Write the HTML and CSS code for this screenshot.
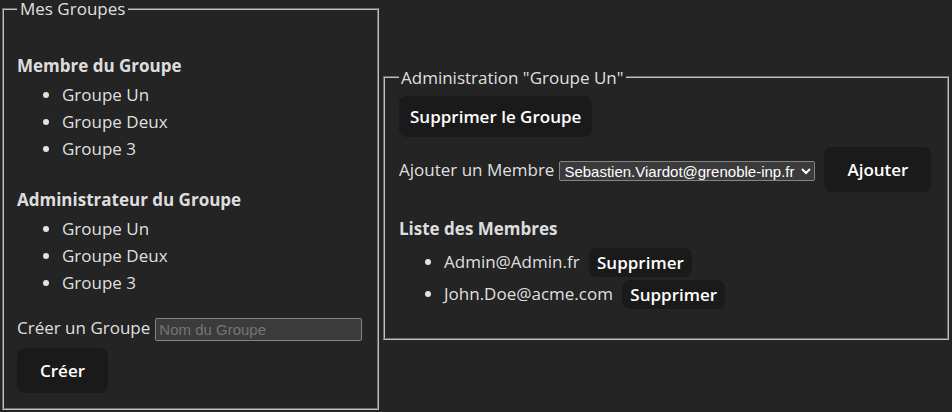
FILE: index.html
```html
<!DOCTYPE html>
<html lang="fr">
<head>
<meta charset="utf-8">
<title>Groupes</title>
<link rel="stylesheet" href="styles.css">
</head>
<body>
<div class="app">
  <fieldset class="panel panel-groups">
    <legend>Mes Groupes</legend>
    <div class="section-title first">Membre du Groupe</div>
    <ul class="list">
      <li>Groupe Un</li>
      <li>Groupe Deux</li>
      <li>Groupe 3</li>
    </ul>
    <div class="section-title">Administrateur du Groupe</div>
    <ul class="list">
      <li>Groupe Un</li>
      <li>Groupe Deux</li>
      <li>Groupe 3</li>
    </ul>
    <div class="form-row create-row">
      <label for="nom">Créer un Groupe</label>
      <input id="nom" class="text-input" type="text" placeholder="Nom du Groupe">
    </div>
    <button class="btn create-btn">Créer</button>
  </fieldset>

  <fieldset class="panel panel-admin">
    <legend>Administration "Groupe Un"</legend>
    <button class="btn btn-compact">Supprimer le Groupe</button>
    <div class="form-row add-row">
      <label for="membre">Ajouter un Membre</label>
      <select id="membre" class="member-select">
        <option>Sebastien.Viardot@grenoble-inp.fr</option>
      </select>
      <button class="btn add-btn">Ajouter</button>
    </div>
    <div class="section-title members-title">Liste des Membres</div>
    <ul class="list member-list">
      <li>Admin@Admin.fr <button class="btn btn-small">Supprimer</button></li>
      <li>John.Doe@acme.com <button class="btn btn-small">Supprimer</button></li>
    </ul>
  </fieldset>
</div>
</body>
</html>
```

FILE: styles.css
```css
:root {
  color-scheme: dark;
  background-color: #242424;
  color: rgba(255, 255, 255, 0.87);
  font-family: "Open Sans", sans-serif;
  font-size: 17px;
  line-height: 27px;
}

body {
  margin: 0;
}

.app {
  display: flex;
  align-items: center;
  margin-top: -5px;
}

.panel {
  margin: 0 2px;
  padding: 6px 10px 11px 13px;
  border: 2px groove rgb(192, 192, 192);
  box-sizing: border-box;
}

.panel legend {
  padding: 0 3px;
}

.panel-groups {
  width: 377px;
}

.panel-admin {
  width: 566px;
  padding-top: 5px;
  padding-bottom: 12px;
  padding-left: 14px;
  margin-bottom: 2px;
}

.panel-admin legend {
  padding: 0 2px;
}

.section-title {
  font-weight: 700;
  margin: 24px 0 2px;
}

.section-title.first {
  margin-top: 24px;
}

.list {
  margin: 0;
  padding-left: 45px;
}

.form-row {
  display: flex;
  align-items: center;
  column-gap: 5px;
}

.form-row label {
  white-space: nowrap;
  flex-shrink: 0;
}

.create-row {
  margin-top: 18px;
}

.text-input {
  width: 207px;
  height: 23px;
  margin-top: 3px;
  flex-shrink: 0;
  box-sizing: border-box;
  font-family: "Liberation Sans", Arial, sans-serif;
  font-size: 15px;
}

.btn {
  border-radius: 8px;
  border: 1px solid transparent;
  background-color: #1a1a1a;
  color: #fff;
  font-family: inherit;
  font-size: 17px;
  font-weight: 600;
  line-height: 21px;
  padding: 11px 22px;
  cursor: pointer;
}

.create-btn {
  margin-top: 7px;
  margin-bottom: 4px;
}

.btn-compact {
  padding: 9px 10px;
}

.add-row {
  margin-top: 10px;
}

.member-select {
  width: 256px;
  font-family: "Liberation Sans", Arial, sans-serif;
  font-size: 15px;
  height: 20px;
  margin-top: 3px;
  flex-shrink: 0;
}

.add-btn {
  margin-left: 4px;
  flex-shrink: 0;
}

.members-title {
  margin: 23px 0 4px;
}

.member-list {
  margin-bottom: 16px;
}

.member-list li {
  line-height: 32px;
}

.btn-small {
  padding: 3px 7px;
  vertical-align: middle;
  line-height: 21px;
  margin-left: 5px;
}
```
